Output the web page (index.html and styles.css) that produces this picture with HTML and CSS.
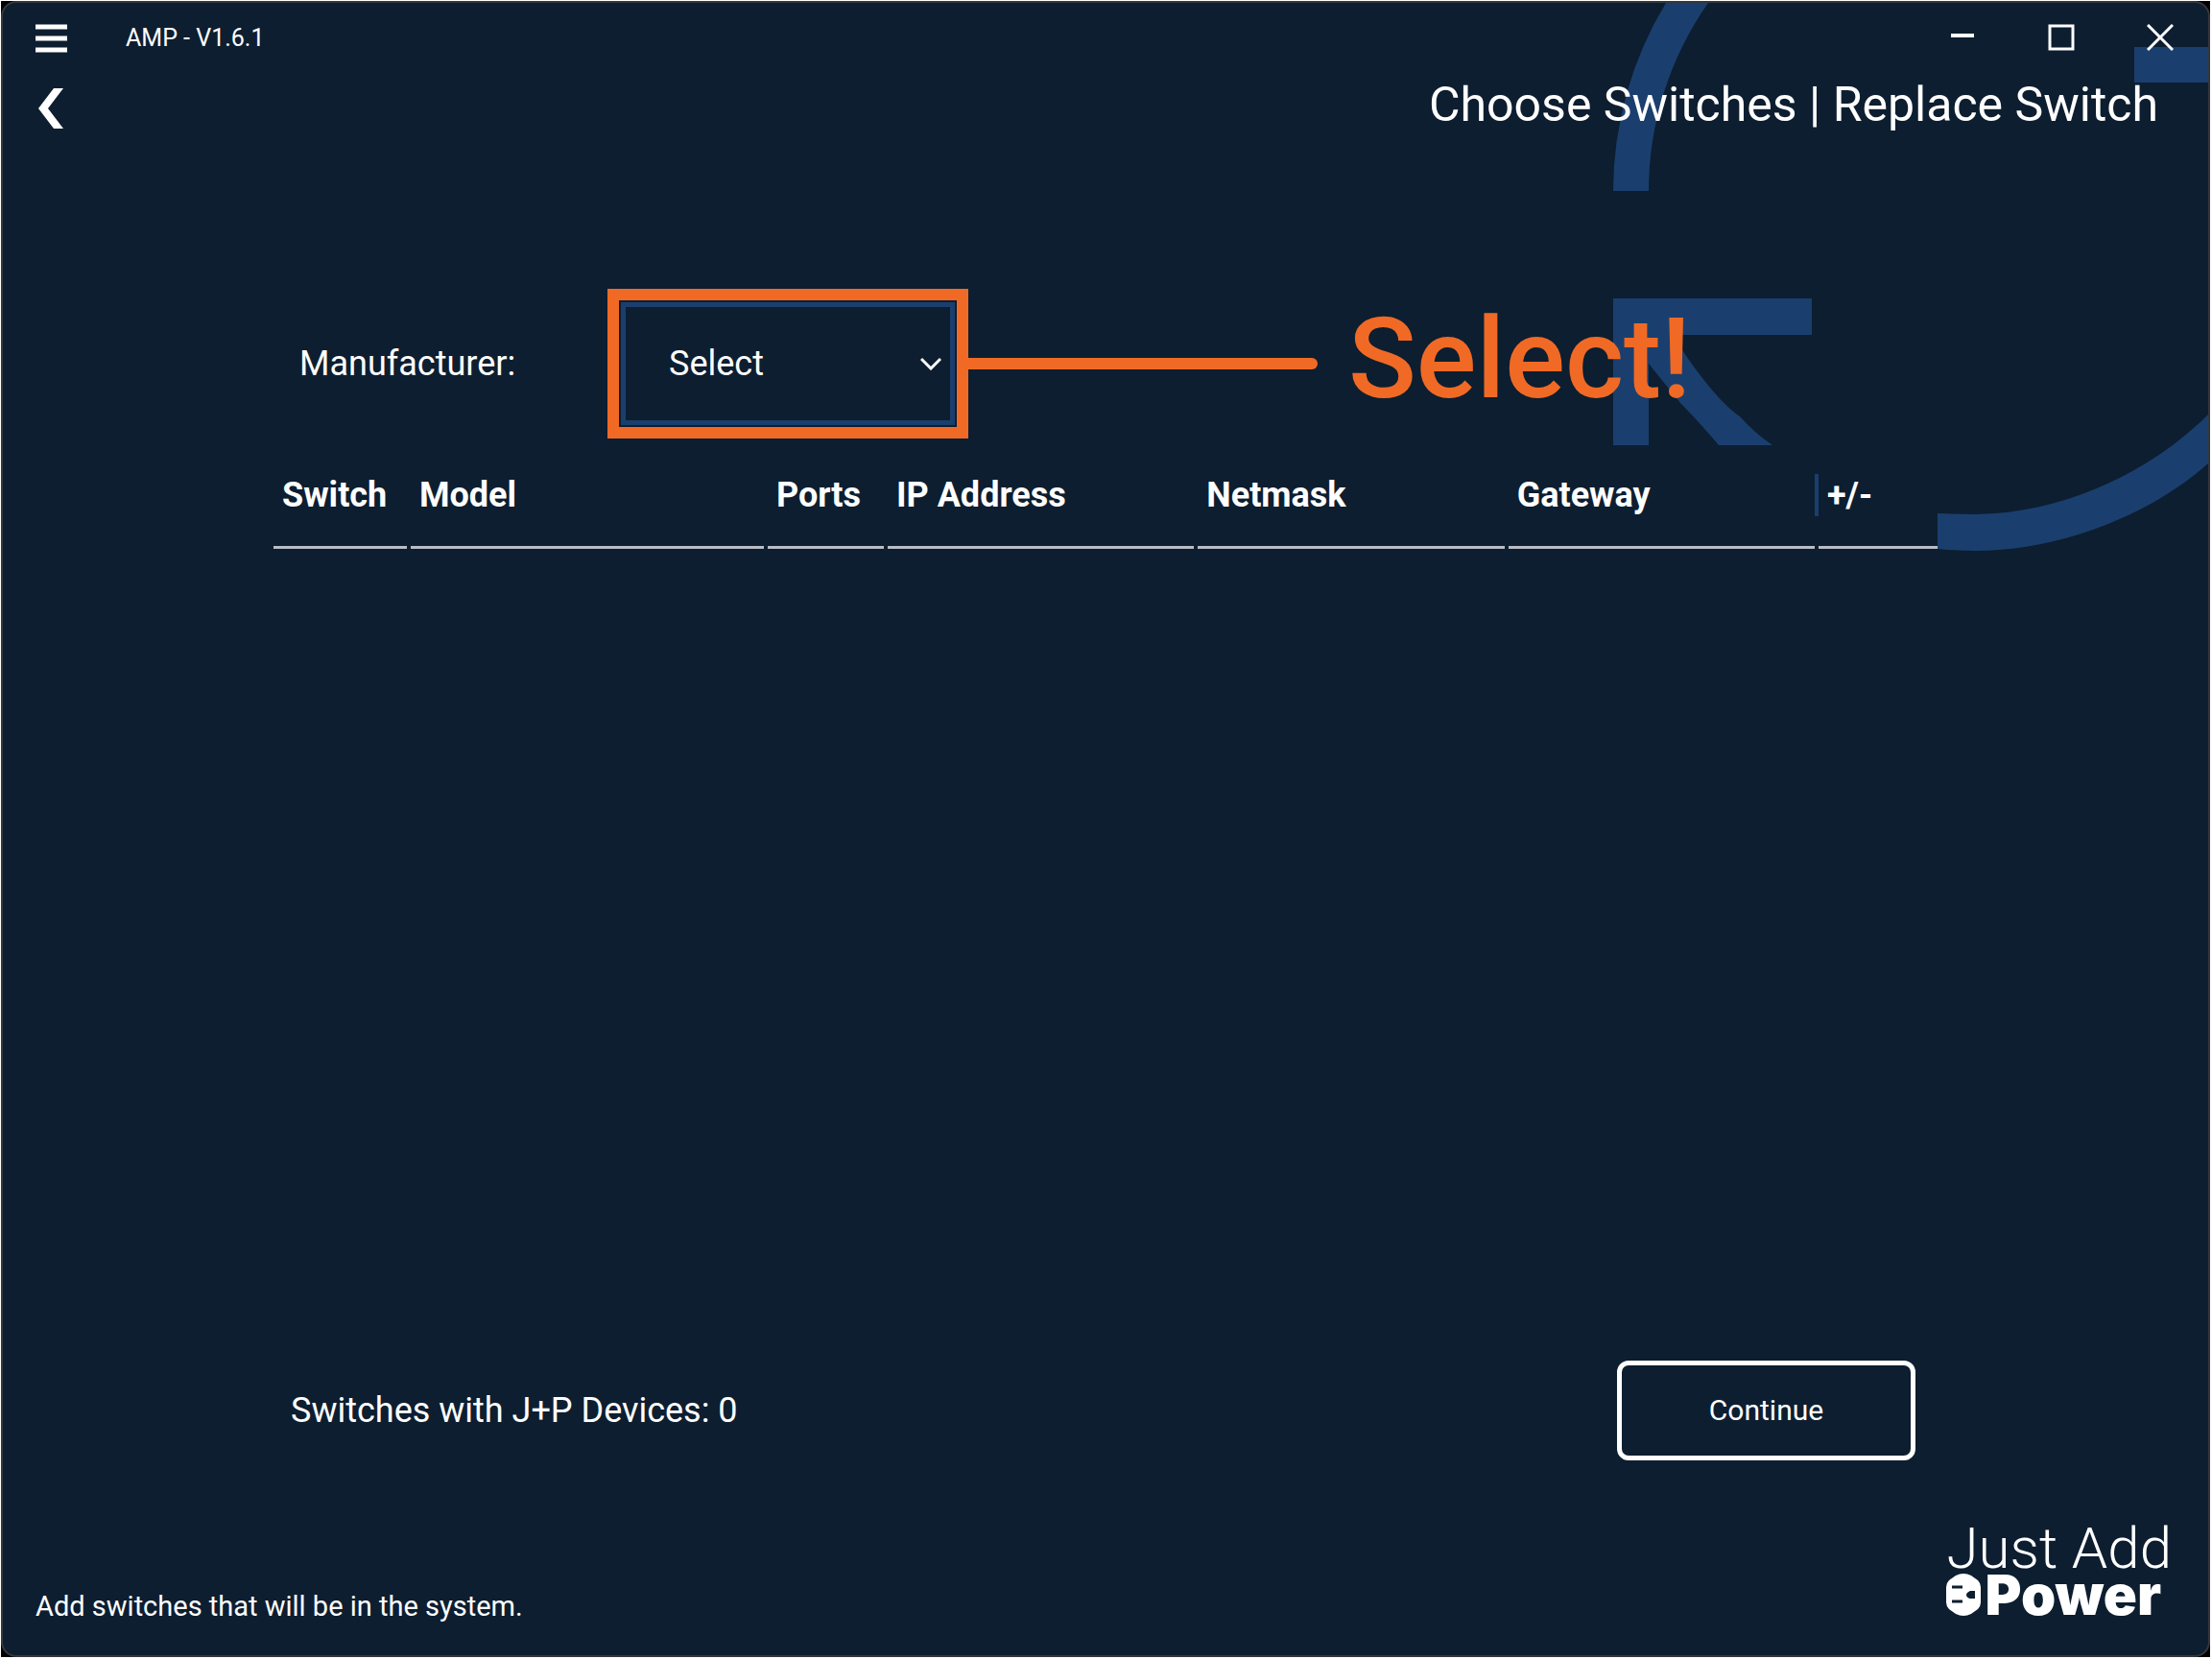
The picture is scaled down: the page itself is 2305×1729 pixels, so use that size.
FILE: index.html
```
<!DOCTYPE html>
<html lang="en">
<head>
  <meta charset="UTF-8" />
  <meta name="viewport" content="width=device-width, initial-scale=1.0"/>
  <title>AMP - V1.6.1</title>
  <link rel="stylesheet" href="styles.css">
</head>
<body>

  <div class="window">

    <!-- Watermark -->
    <svg class="watermark" viewBox="0 0 620 575" aria-hidden="true">
      <path d="M0 196A380 380 0 0 1 55 0H99A342 342 0 0 0 37 196Z" />
      <path d="M543 46H620V83H543Z" />
      <path d="M0 308H207V346H61L72 362C95 396 114 418 132 431Q147 448 166 461H110Q88 435 70 417L37 376V461H0Z" />
      <path d="M338 532Q357 533 378 533C465 532 557 492 620 429V480C557 536 462 571 378 571Q357 571 338 569Z" />
    </svg>

    <header class="titlebar">
      <button class="icon-btn menu-btn" aria-label="Menu">
        <svg width="34" height="30" viewBox="0 0 34 30"><path d="M0 3H33M0 15H33M0 27H33" stroke="currentColor" stroke-width="5" /></svg>
      </button>
      <span class="app-name">AMP - V1.6.1</span>
      <div class="window-controls">
        <button class="icon-btn" aria-label="Minimize">
          <svg width="28" height="28" viewBox="0 0 28 28"><path d="M2 12H26" stroke="currentColor" stroke-width="4" /></svg>
        </button>
        <button class="icon-btn" aria-label="Maximize">
          <svg width="28" height="28" viewBox="0 0 28 28"><path d="M2 2H26V26H2Z" fill="none" stroke="currentColor" stroke-width="3" /></svg>
        </button>
        <button class="icon-btn" aria-label="Close">
          <svg width="28" height="28" viewBox="0 0 28 28"><path d="M1 1L27 27M27 1L1 27" stroke="currentColor" stroke-width="3" /></svg>
        </button>
      </div>
    </header>

    <div class="page-header">
      <button class="icon-btn" aria-label="Back">
        <svg width="26" height="42" viewBox="0 0 26 42"><path d="M16 0H26L10 21L26 42H16L0 21Z" fill="currentColor" /></svg>
      </button>
      <h1>Choose Switches | Replace Switch</h1>
    </div>

    <main>
      <div class="manufacturer-row">
        <label for="manufacturer">Manufacturer:</label>
        <div class="highlight">
          <select id="manufacturer">
            <option>Select</option>
          </select>
          <svg class="chevron" width="22" height="14" viewBox="0 0 22 14"><path d="M1 2L11 12L21 2" fill="none" stroke="currentColor" stroke-width="3" /></svg>
        </div>
        <div class="callout-line"></div>
        <div class="callout-text">Select!</div>
      </div>

      <table class="switch-table">
        <colgroup>
          <col class="col-switch"><col class="col-model"><col class="col-ports">
          <col><col><col>
          <col class="col-action">
        </colgroup>
        <thead>
          <tr>
            <th>Switch</th>
            <th>Model</th>
            <th>Ports</th>
            <th>IP Address</th>
            <th>Netmask</th>
            <th>Gateway</th>
            <th class="action">+/-</th>
          </tr>
        </thead>
        <tbody></tbody>
      </table>

      <div class="summary-row">
        <span>Switches with J+P Devices: 0</span>
        <button class="continue-btn">Continue</button>
      </div>
    </main>

    <footer>
      <p>Add switches that will be in the system.</p>
      <div class="logo">
        <div class="logo-top">Just Add</div>
        <div class="logo-bottom">
          <svg width="36" height="44" viewBox="0 0 36 44">
            <path d="M10 2Q18 -2 26 2L33 7Q36 10 36 14V30Q36 34 33 37L26 42Q18 46 10 42L3 37Q0 34 0 30V14Q0 10 3 7Z" fill="#fff" />
            <path d="M6 14H17M6 29H17" stroke="#0d1e30" stroke-width="3" />
            <path d="M30 18H25Q21 20 21 22Q21 25 25 26H30Z" fill="#0d1e30" />
          </svg>
          <span>Power</span>
        </div>
      </div>
    </footer>

  </div>

</body>
</html>
```
FILE: styles.css
```
* {
  box-sizing: border-box;
}

html {
  background: #fff;
}

body {
  margin: 1px 2px 2px 1px;
  background: #000;
  color: #fff;
  font-family: Roboto, "Liberation Sans", sans-serif;
  font-size: 36px;
  line-height: 44px;
}

.window {
  position: relative;
  display: flex;
  flex-direction: column;
  min-height: calc(100vh - 3px);
  background: #0d1e30;
  border: 2px solid #35373a;
  border-radius: 16px;
  overflow: hidden;
}

.watermark {
  position: absolute;
  top: 0;
  right: 0;
  width: 620px;
  height: 575px;
  fill: #1a3f6e;
}

.titlebar,
.page-header,
main,
footer {
  position: relative;
}

.icon-btn {
  display: flex;
  padding: 0;
  background: none;
  border: none;
  color: #fff;
  cursor: pointer;
}

/* Title bar */
.titlebar {
  display: flex;
  align-items: center;
  height: 74px;
  padding: 0 36px 0 34px;
}

.app-name {
  margin-left: 60px;
  font-size: 25px;
}

.window-controls {
  display: flex;
  gap: 75px;
  margin: 0 0 2px auto;
}

.page-header {
  display: flex;
  align-items: center;
  justify-content: space-between;
  height: 72px;
  padding: 0 52px 0 37px;
}

h1 {
  margin: 0 0 8px;
  font-size: 50px;
  font-weight: 400;
}

/* Content */
main {
  flex: 1;
  display: flex;
  flex-direction: column;
  padding: 152px 278px 0;
}

.manufacturer-row {
  display: flex;
  align-items: center;
  padding-left: 31px;
}

.manufacturer-row label {
  width: 321px;
}

.highlight {
  position: relative;
  width: 376px;
  height: 156px;
  padding: 2px;
  border: 12px solid #f06a25;
}

.highlight select {
  width: 100%;
  height: 100%;
  padding: 0 45px;
  appearance: none;
  background: #0d1e30;
  border: 5px solid #1a3f6e;
  border-radius: 0;
  color: #fff;
  font: inherit;
}

.chevron {
  position: absolute;
  top: 59px;
  right: 16px;
  pointer-events: none;
}

.callout-line {
  width: 364px;
  height: 12px;
  background: #f06a25;
  border-radius: 0 6px 6px 0;
}

.callout-text {
  margin-left: 32px;
  padding-bottom: 10px;
  color: #f06a25;
  font-size: 117px;
  font-weight: 500;
  line-height: 146px;
}

.switch-table {
  width: 100%;
  margin-top: 24px;
  table-layout: fixed;
  border-collapse: separate;
  border-spacing: 4px;
}

.col-switch {
  width: 139px;
}

.col-model {
  width: 368px;
}

.col-ports {
  width: 121px;
}

.col-action {
  width: 124px;
}

th {
  position: relative;
  padding: 9px 9px 31px;
  border-bottom: 3px solid #b8bdc6;
  font-weight: 700;
  text-align: left;
}

/* column resize grip */
th.action::before {
  content: "";
  position: absolute;
  top: 9px;
  left: -4px;
  width: 4px;
  height: 44px;
  background: #1a3f6e;
}

.summary-row {
  display: flex;
  align-items: center;
  justify-content: space-between;
  margin-top: auto;
  padding: 0 27px 0 22px;
}

.continue-btn {
  width: 311px;
  height: 104px;
  padding: 0 0 2px;
  background: none;
  border: 5px solid #fff;
  border-radius: 12px;
  color: #fff;
  font-family: inherit;
  font-size: 30px;
  cursor: pointer;
}

/* Footer */
footer {
  display: flex;
  align-items: flex-end;
  justify-content: space-between;
  height: 203px;
  padding: 0 38px 29px 34px;
}

footer p {
  margin: 0;
  font-size: 29px;
}

.logo {
  margin-bottom: 12px;
}

.logo-top {
  font-size: 60px;
  font-weight: 300;
  line-height: 52px;
}

.logo-bottom {
  display: flex;
  align-items: center;
  gap: 4px;
  font-family: Inter, Roboto, sans-serif;
  font-size: 58px;
  font-weight: 900;
}
```
